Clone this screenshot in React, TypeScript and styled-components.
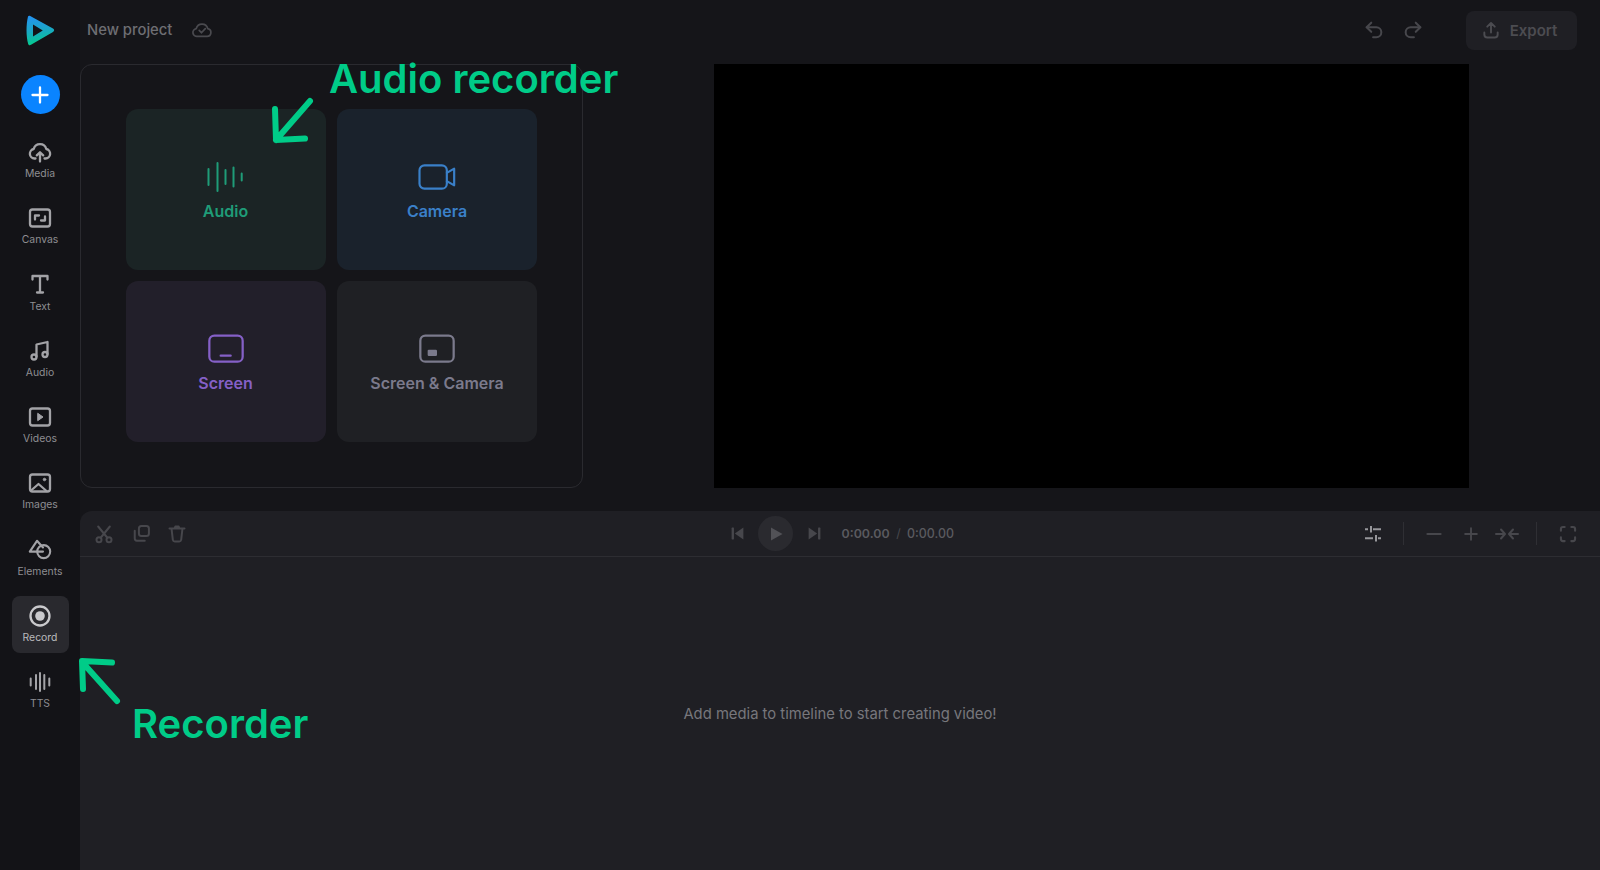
import React from "react";
import styled, { createGlobalStyle } from "styled-components";

const GlobalStyle = createGlobalStyle`
  html, body {
    margin: 0;
    height: 100%;
    background: #151519;
    overflow: hidden;
  }
  * {
    box-sizing: border-box;
  }
  #root {
    height: 100%;
  }
`;

const Page = styled.div`
  position: relative;
  display: flex;
  width: 1600px;
  height: 870px;
  background: #151519;
  font-family: Inter, "Liberation Sans", sans-serif;
`;

const Sidebar = styled.aside`
  flex: 0 0 80px;
  display: flex;
  flex-direction: column;
  align-items: center;
  padding-top: 15px;
  background: #131317;
`;

const LogoMark = styled.svg`
  display: block;
  width: 30px;
  height: 31px;
`;

const AddButton = styled.button`
  width: 39px;
  height: 39px;
  margin: 29px 0 18px;
  padding: 0;
  display: flex;
  align-items: center;
  justify-content: center;
  border: 0;
  border-radius: 50%;
  background: #0a84ff;
  color: #fff;
`;

const NavList = styled.nav`
  display: flex;
  flex-direction: column;
  gap: 9.3px;
`;

const NavItem = styled.div<{ $active?: boolean }>`
  width: 57px;
  height: 57px;
  display: flex;
  flex-direction: column;
  align-items: center;
  padding-top: 8px;
  gap: 3px;
  border-radius: 8px;
  background: ${(p) => (p.$active ? "#29292e" : "transparent")};
  color: ${(p) => (p.$active ? "#c9c9cc" : "#a3a3a7")};
`;

const NavLabel = styled.span<{ $active?: boolean }>`
  font-size: 10.4px;
  line-height: 14px;
  color: ${(p) => (p.$active ? "#b9b9bc" : "#8e8e92")};
`;

const Main = styled.div`
  flex: 1;
  min-width: 0;
  display: flex;
  flex-direction: column;
`;

const Header = styled.header`
  flex: 0 0 64px;
  display: flex;
  align-items: center;
  justify-content: space-between;
  padding: 0 23px 4px 7px;
`;

const ProjectInfo = styled.div`
  display: flex;
  align-items: center;
  gap: 19px;
  color: #4a4a4f;
`;

const ProjectName = styled.span`
  font-size: 14.8px;
  font-weight: 500;
  color: #6e6e73;
`;

const HeaderActions = styled.div`
  display: flex;
  align-items: center;
  color: #47474c;
`;

const HistoryButtons = styled.div`
  display: flex;
  gap: 17px;
  margin-right: 42px;
`;

const ExportButton = styled.button`
  width: 111px;
  height: 39px;
  display: flex;
  align-items: center;
  justify-content: center;
  gap: 9px;
  padding: 0 5px 0 0;
  border: 0;
  border-radius: 8px;
  background: #1f1f24;
  color: #4c4c51;
  font: 600 15px Inter, "Liberation Sans", sans-serif;
`;

const Workspace = styled.section`
  flex: 0 0 424px;
  display: flex;
  gap: 131px;
`;

const RecorderPanel = styled.div`
  width: 503px;
  height: 424px;
  padding: 44px 0 0 44.5px;
  border: 1px solid #2a2a2f;
  border-radius: 12px;
`;

const RecorderGrid = styled.div`
  display: grid;
  grid-template-columns: 200px 200px;
  grid-auto-rows: 160.5px;
  gap: 11.5px;
`;

const RecorderCard = styled.div<{ $bg: string; $fg: string }>`
  display: flex;
  flex-direction: column;
  align-items: center;
  padding-top: 48px;
  gap: 3px;
  border-radius: 12px;
  background: ${(p) => p.$bg};
  color: ${(p) => p.$fg};
`;

const CardLabel = styled.span`
  font-size: 16px;
  line-height: 22px;
  font-weight: 600;
`;

const VideoPreview = styled.div`
  width: 755px;
  height: 424px;
  background: #000;
`;

const Timeline = styled.section`
  flex: 1;
  margin-top: 23px;
  display: flex;
  flex-direction: column;
  background: #1f1f24;
  border-top-left-radius: 12px;
`;

const Toolbar = styled.div`
  flex: 0 0 46px;
  display: grid;
  grid-template-columns: 1fr auto 1fr;
  align-items: center;
  padding: 0 14px;
  border-bottom: 1px solid #2d2d32;
  color: #47474c;
`;

const ToolGroup = styled.div<{ $end?: boolean }>`
  display: flex;
  align-items: center;
  justify-content: ${(p) => (p.$end ? "flex-end" : "flex-start")};
`;

const TransportGroup = styled(ToolGroup)`
  margin-left: 1px;
`;

const ToolButton = styled.span`
  width: 36.6px;
  height: 24px;
  display: flex;
  align-items: center;
  justify-content: flex-start;
  color: #47474c;
`;

const RightTool = styled.span<{ $bright?: boolean }>`
  width: 36.6px;
  height: 24px;
  display: flex;
  align-items: center;
  justify-content: center;
  color: ${(p) => (p.$bright ? "#97979b" : "#47474c")};
`;

const Divider = styled.span`
  width: 1px;
  height: 23px;
  margin: 0 12px 0 11px;
  background: #2f2f34;
`;

const TransportButton = styled.span`
  display: flex;
  align-items: center;
  justify-content: center;
  width: 20px;
  height: 20px;
  color: #47474c;
`;

const PlayButton = styled.span`
  display: flex;
  align-items: center;
  justify-content: center;
  width: 35px;
  height: 35px;
  margin: 0 11px;
  border-radius: 50%;
  background: #2a2a2f;
  color: #525257;
`;

const TimeRead = styled.div`
  display: flex;
  gap: 6.5px;
  margin-left: 17.5px;
  font-size: 12.4px;
  font-weight: 600;
  color: #5a5a5f;
`;

const TimeSep = styled.span`
  font-weight: 400;
  color: #47474c;
`;

const TimeTotal = styled.span`
  font-weight: 500;
`;

const EmptyTimeline = styled.div`
  flex: 1;
  display: flex;
  align-items: center;
  justify-content: center;
  font-size: 14.8px;
  color: #77777c;
`;

const Callout = styled.span<{ $x: number; $y: number }>`
  position: absolute;
  left: ${(p) => p.$x}px;
  top: ${(p) => p.$y}px;
  font-size: 40px;
  line-height: 50px;
  font-weight: 600;
  color: #00cc88;
  white-space: nowrap;
`;

const CalloutArrow = styled.svg<{ $x: number; $y: number }>`
  position: absolute;
  left: ${(p) => p.$x}px;
  top: ${(p) => p.$y}px;
  width: 46px;
  height: 50px;
  fill: none;
  stroke: #00cc88;
  stroke-width: 6;
  stroke-linecap: round;
  stroke-linejoin: round;
`;

type IconProps = { size?: number; box?: number; sw?: number; children: React.ReactNode };

const Icon = ({ size = 24, box = 24, sw = 2.3, children }: IconProps) => (
  <svg
    width={size}
    height={size}
    viewBox={`0 0 ${box} ${box}`}
    fill="none"
    stroke="currentColor"
    strokeWidth={sw}
    strokeLinecap="round"
    strokeLinejoin="round"
  >
    {children}
  </svg>
);

const navItems: { label: string; icon: React.ReactNode; active?: boolean }[] = [
  {
    label: "Media",
    icon: (
      <Icon>
        <path d="M7.5 18.5H6.5a4.8 4.8 0 0 1-.8-9.5 6.5 6.5 0 0 1 12.6 0 4.8 4.8 0 0 1-.8 9.5h-1" />
        <path d="M12 21.5v-9M8.8 15.4 12 12.2l3.2 3.2" />
      </Icon>
    ),
  },
  {
    label: "Canvas",
    icon: (
      <Icon>
        <rect x="2" y="3.5" width="20" height="17" rx="2.5" />
        <path d="M7 13.5v-4h4M17 10.5v4h-4" />
      </Icon>
    ),
  },
  {
    label: "Text",
    icon: (
      <Icon>
        <path d="M4.5 6.5V3h15v3.500M12 3v16.500M9 19.500h6" />
      </Icon>
    ),
  },
  {
    label: "Audio",
    icon: (
      <Icon>
        <path d="M8.5 17.5V5.5l11-2.500v12" />
        <circle cx="6" cy="18" r="2.5" />
        <circle cx="17" cy="15.5" r="2.5" />
      </Icon>
    ),
  },
  {
    label: "Videos",
    icon: (
      <Icon>
        <rect x="2" y="3.5" width="20" height="17" rx="2.5" />
        <path d="m10 8.5 5 3.500-5 3.500z" fill="currentColor" strokeWidth={1} />
      </Icon>
    ),
  },
  {
    label: "Images",
    icon: (
      <Icon>
        <rect x="2" y="3.5" width="20" height="17" rx="2.5" />
        <path d="m3 19.5 7.500-6.500 8 7" />
        <circle cx="16.5" cy="8.5" r="1.3" fill="currentColor" strokeWidth={0.8} />
      </Icon>
    ),
  },
  {
    label: "Elements",
    icon: (
      <Icon sw={2.1}>
        <path d="M15 9.500 9 2.800 1.800 13.600H15" />
        <circle cx="15.7" cy="13.6" r="6.500" />
      </Icon>
    ),
  },
  {
    label: "Record",
    active: true,
    icon: (
      <Icon>
        <circle cx="12" cy="12" r="9.5" />
        <circle cx="12" cy="12" r="4.8" fill="currentColor" stroke="none" />
      </Icon>
    ),
  },
  {
    label: "TTS",
    icon: (
      <Icon sw={2}>
        <path d="M2.7 8.5v7M8 5v14M12 3v18M16.3 5v14M21.3 8.500v7" />
      </Icon>
    ),
  },
];

const recorderCards: { label: string; bg: string; fg: string; icon: React.ReactNode }[] = [
  {
    label: "Audio",
    bg: "#1b2425",
    fg: "#1f9c78",
    icon: (
      <Icon size={40} box={40} sw={2}>
        <path d="M2.500 12v16M11.500 6v28M19.500 13v14M27.500 10.500v19M35.700 16.500v7" />
      </Icon>
    ),
  },
  {
    label: "Camera",
    bg: "#1a222c",
    fg: "#3a80c9",
    icon: (
      <Icon size={40} sw={1.3}>
        <rect x="1.5" y="5" width="16.4" height="14" rx="3" />
        <path d="M17.9 9.5 22.300 7v10l-4.400-2.500" />
      </Icon>
    ),
  },
  {
    label: "Screen",
    bg: "#221f2a",
    fg: "#8560c7",
    icon: (
      <Icon size={40} sw={1.35}>
        <rect x="2" y="4" width="20" height="15.6" rx="3" />
        <path d="M8.8 16h6" />
      </Icon>
    ),
  },
  {
    label: "Screen & Camera",
    bg: "#1f2024",
    fg: "#7b7a8c",
    icon: (
      <Icon size={40} sw={1.35}>
        <rect x="2" y="4" width="20" height="15.6" rx="3" />
        <rect x="6.4" y="12.4" width="5.6" height="3.8" rx="0.7" fill="currentColor" stroke="none" />
      </Icon>
    ),
  },
];

export default function App() {
  return (
    <Page>
      <GlobalStyle />
      <Sidebar>
        <LogoMark viewBox="0 0 30 31">
          <defs>
            <linearGradient id="logoFill" x1="0.2" y1="0" x2="0.3" y2="1">
              <stop offset="0" stopColor="#2492f2" />
              <stop offset="0.5" stopColor="#1ba6c6" />
              <stop offset="1" stopColor="#03cc8c" />
            </linearGradient>
          </defs>
          <path
            fillRule="evenodd"
            fill="url(#logoFill)"
            d="M3 1.400C3.400.6 4.300.4 5.200.9L28 13.600C29.500 14.500 29.500 16 28 17L6 29.800C4.800 30.600 3.600 30.200 3.200 28.900 1 21 1 9.500 3 1.400ZM8 9.500V21.500L17.800 15.500Z"
          />
        </LogoMark>
        <AddButton>
          <svg width="18" height="18" viewBox="0 0 18 18" fill="none" stroke="currentColor" strokeWidth="2.3" strokeLinecap="round">
            <path d="M9 1.5v15M1.5 9h15" />
          </svg>
        </AddButton>
        <NavList>
          {navItems.map((item) => (
            <NavItem key={item.label} $active={item.active}>
              {item.icon}
              <NavLabel $active={item.active}>{item.label}</NavLabel>
            </NavItem>
          ))}
        </NavList>
      </Sidebar>

      <Main>
        <Header>
          <ProjectInfo>
            <ProjectName>New project</ProjectName>
            <Icon size={22} sw={1.9}>
              <path d="M7 19h10.5a4.3 4.3 0 0 0 .8-8.5 6.5 6.5 0 0 0-12.6 0A4.3 4.3 0 0 0 7 19Z" />
              <path d="m9 12.5 2.400 2.500 4.200-4.500" />
            </Icon>
          </ProjectInfo>
          <HeaderActions>
            <HistoryButtons>
              <Icon size={22} sw={2.2}>
                <path d="M9 14 4 9l5-5" />
                <path d="M4 9h10.5a5.5 5.5 0 0 1 0 11H11" />
              </Icon>
              <Icon size={22} sw={2.2}>
                <path d="m15 14 5-5-5-5" />
                <path d="M20 9H9.5a5.5 5.5 0 0 0 0 11H13" />
              </Icon>
            </HistoryButtons>
            <ExportButton>
              <Icon size={20}>
                <path d="M12 15V4M7.5 8 12 3.5 16.5 8" />
                <path d="M4 15v2.5A3.5 3.5 0 0 0 7.5 21h9a3.5 3.5 0 0 0 3.5-3.5V15" />
              </Icon>
              Export
            </ExportButton>
          </HeaderActions>
        </Header>

        <Workspace>
          <RecorderPanel>
            <RecorderGrid>
              {recorderCards.map((card) => (
                <RecorderCard key={card.label} $bg={card.bg} $fg={card.fg}>
                  {card.icon}
                  <CardLabel>{card.label}</CardLabel>
                </RecorderCard>
              ))}
            </RecorderGrid>
          </RecorderPanel>
          <VideoPreview />
        </Workspace>

        <Timeline>
          <Toolbar>
            <ToolGroup>
              <ToolButton>
                <Icon size={20} sw={2.4}>
                  <circle cx="6" cy="19" r="3" />
                  <circle cx="18" cy="19" r="3" />
                  <path d="M8 16.5 19 3M16 16.5 5 3" />
                </Icon>
              </ToolButton>
              <ToolButton>
                <Icon size={20} sw={2.4}>
                  <rect x="9.5" y="2.5" width="12" height="12" rx="3" />
                  <path d="M4.5 8v9.5a2.5 2.5 0 0 0 2.5 2.5h9.5" />
                </Icon>
              </ToolButton>
              <ToolButton>
                <Icon size={20} sw={2.4}>
                  <path d="M3 5.5h18M9 5.5 10 3h4l1 2.500" />
                  <path d="M5.5 6 7 19a2.5 2.5 0 0 0 2.5 2h5a2.5 2.5 0 0 0 2.500-2l1.500-13" />
                </Icon>
              </ToolButton>
            </ToolGroup>

            <TransportGroup>
              <TransportButton>
                <svg width="15" height="15" viewBox="0 0 14 14" fill="currentColor">
                  <rect x="1.5" y="1.5" width="2.2" height="11" rx="0.5" />
                  <path d="M12.5 1.5v11L4.5 7z" />
                </svg>
              </TransportButton>
              <PlayButton>
                <svg width="18" height="18" viewBox="0 0 18 18" fill="currentColor">
                  <path d="M4 2.5v13L15.5 9z" />
                </svg>
              </PlayButton>
              <TransportButton>
                <svg width="15" height="15" viewBox="0 0 14 14" fill="currentColor">
                  <rect x="10.3" y="1.5" width="2.2" height="11" rx="0.5" />
                  <path d="M1.5 1.5v11l8-5.500z" />
                </svg>
              </TransportButton>
              <TimeRead>
                <span>0:00.00</span>
                <TimeSep>/</TimeSep>
                <TimeTotal>0:00.00</TimeTotal>
              </TimeRead>
            </TransportGroup>

            <ToolGroup $end>
              <RightTool $bright>
                <svg width="18" height="18" viewBox="0 0 18 18" fill="currentColor">
                  <path d="M1 3.2h3v2H1zM9 3.2h8v2H9zM6 1h2v6.400H6zM1 12.200h8v2H1zM14 12.200h3v2h-3zM11 10h2v6.400h-2z" />
                </svg>
              </RightTool>
              <Divider />
              <RightTool>
                <Icon size={20}>
                  <path d="M4 12h16" />
                </Icon>
              </RightTool>
              <RightTool>
                <Icon size={20}>
                  <path d="M5 12h14M12 5v14" />
                </Icon>
              </RightTool>
              <RightTool>
                <svg width="24" height="20" viewBox="0 0 24 20" fill="none" stroke="currentColor" strokeWidth="2" strokeLinecap="round" strokeLinejoin="round">
                  <path d="M1 10h8.5M6 5.500 10 10l-4 4.500M23 10h-8.500M18 5.500 14 10l4 4.500" />
                </svg>
              </RightTool>
              <Divider />
              <RightTool>
                <Icon size={20} sw={2.5}>
                  <path d="M3.5 8V6a2.5 2.5 0 0 1 2.5-2.5h2M16 3.5h2A2.5 2.5 0 0 1 20.5 6v2M20.500 16v2a2.500 2.500 0 0 1-2.500 2.500h-2M8 20.500H6A2.500 2.500 0 0 1 3.500 18v-2" />
                </Icon>
              </RightTool>
            </ToolGroup>
          </Toolbar>
          <EmptyTimeline>Add media to timeline to start creating video!</EmptyTimeline>
        </Timeline>
      </Main>

      <Callout $x={329} $y={54}>Audio recorder</Callout>
      <CalloutArrow $x={268} $y={96} viewBox="0 0 46 50">
        <path d="M42 5 8 44M7 13l1 31 29-1.500" />
      </CalloutArrow>
      <Callout $x={132} $y={699}>Recorder</Callout>
      <CalloutArrow $x={78} $y={656} viewBox="0 0 46 50">
        <path d="M39 45 5 7M5 33 4 5l30 1.500" />
      </CalloutArrow>
    </Page>
  );
}
